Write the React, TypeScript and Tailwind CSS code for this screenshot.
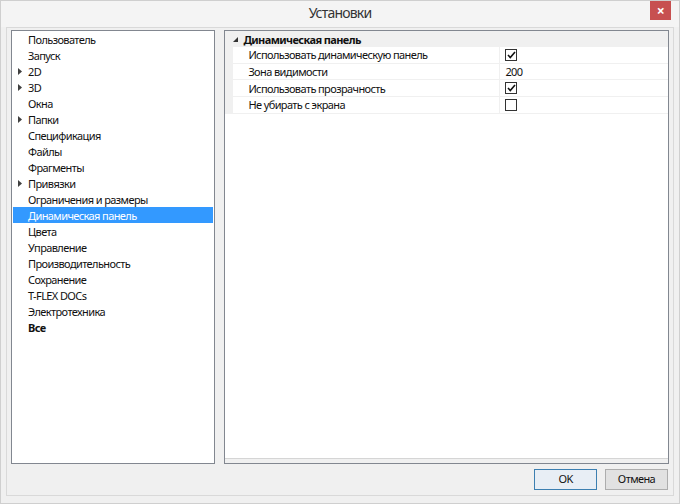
import { useState } from "react";

type NavItem = { label: string; expandable?: boolean; bold?: boolean };

const navItems: NavItem[] = [
    { label: "Пользователь" },
    { label: "Запуск" },
    { label: "2D", expandable: true },
    { label: "3D", expandable: true },
    { label: "Окна" },
    { label: "Папки", expandable: true },
    { label: "Спецификация" },
    { label: "Файлы" },
    { label: "Фрагменты" },
    { label: "Привязки", expandable: true },
    { label: "Ограничения и размеры" },
    { label: "Динамическая панель" },
    { label: "Цвета" },
    { label: "Управление" },
    { label: "Производительность" },
    { label: "Сохранение" },
    { label: "T-FLEX DOCs" },
    { label: "Электротехника" },
    { label: "Все", bold: true },
];

type Prop = { name: string; kind: "check" | "text"; value: boolean | string };

const props: Prop[] = [
    { name: "Использовать динамическую панель", kind: "check", value: true },
    { name: "Зона видимости", kind: "text", value: "200" },
    { name: "Использовать прозрачность", kind: "check", value: true },
    { name: "Не убирать с экрана", kind: "check", value: false },
];

export default function App() {
    const [selected, setSelected] = useState("Динамическая панель");

    return (
        <div
            className="w-[680px] h-[504px] bg-[#f0f0f0] border border-[#cfcfcf] flex flex-col text-[11px] tracking-[-0.6px] text-[#111]"
            style={{ fontFamily: '"Noto Sans", "Open Sans", sans-serif' }}
        >
            {/* title bar */}
            <div className="h-[26px] shrink-0 flex items-start relative bg-[#f4f4f4]">
                <div className="flex-1 text-center text-[14px] tracking-[-0.8px] text-[#333] pt-[1px]">Установки</div>
                <button className="absolute right-[8px] top-0 w-[21px] h-[19px] bg-[#c75050] text-white flex items-center justify-center text-[14px] font-bold leading-none">
                    ×
                </button>
            </div>

            {/* client area */}
            <div className="flex-1 mx-[5px] mb-[7px] border border-[#d9d9d9] flex flex-col px-[4px] pt-[2px]">
                <div className="flex gap-[9px] h-[434px]">
                    <NavList selected={selected} onSelect={setSelected} />
                    <PropertyGrid />
                </div>
                <div className="flex justify-end gap-[8px] mt-[5px] pr-[1px]">
                    <button className="w-[63px] h-[21px] border border-[#3c7fb1] bg-[#e8eef5] text-[11px]">OK</button>
                    <button className="w-[63px] h-[21px] border border-[#adadad] bg-[#e1e1e1] text-[11px]">Отмена</button>
                </div>
            </div>
        </div>
    );
}

function NavList({ selected, onSelect }: { selected: string; onSelect: (s: string) => void }) {
    return (
        <div className="w-[205px] h-full bg-white border border-[#828790] px-[1px]">
            {navItems.map((item) => {
                const active = item.label === selected;
                return (
                    <div
                        key={item.label}
                        onClick={() => onSelect(item.label)}
                        className={
                            "h-[16px] flex items-center leading-none cursor-default " +
                            (active ? "bg-[#3399ff] text-white" : "")
                        }
                    >
                        <span className="w-[15px] flex justify-end pr-[6px] shrink-0">
                            {item.expandable && (
                                <svg width="4" height="7" viewBox="0 0 4 7">
                                    <path d="M0 0 L4 3.5 L0 7 Z" fill="#404040" />
                                </svg>
                            )}
                        </span>
                        <span className={item.bold ? "font-bold" : ""}>{item.label}</span>
                    </div>
                );
            })}
        </div>
    );
}

function PropertyGrid() {
    return (
        <div className="w-[446px] h-full bg-white border border-[#828790] flex flex-col">
            <div className="flex-1">
                <div className="h-[16px] bg-[#f0f0f0] flex items-center leading-none">
                    <span className="w-[18px] flex justify-center shrink-0 pl-[2px]">
                        <svg width="5" height="5" viewBox="0 0 5 5">
                            <path d="M5 0 L5 5 L0 5 Z" fill="#333" />
                        </svg>
                    </span>
                    <span className="font-bold">Динамическая панель</span>
                </div>
                {props.map((p) => (
                    <div key={p.name} className="h-[16.7px] flex">
                        <div className="w-[8px] bg-[#f0f0f0] shrink-0" />
                        <div className="w-[267px] shrink-0 flex items-center pl-[15px] border-b border-r border-[#f0f0f0] leading-none">
                            {p.name}
                        </div>
                        <div className="flex-1 flex items-center pl-[5px] border-b border-[#f0f0f0] leading-none">
                            {p.kind === "check" ? (
                                <Checkbox checked={p.value as boolean} />
                            ) : (
                                <span className="tracking-[-0.6px]">{p.value as string}</span>
                            )}
                        </div>
                    </div>
                ))}
            </div>
            <div className="h-[5px] bg-[#f0f0f0] border-t border-[#d5d5d5]" />
        </div>
    );
}

function Checkbox({ checked }: { checked: boolean }) {
    return (
        <span className="w-[12px] h-[12px] border border-[#333] bg-white flex items-center justify-center">
            {checked && (
                <svg width="9" height="8" viewBox="0 0 9 8">
                    <path d="M1 4 L3.3 6.5 L8 1" fill="none" stroke="#111" strokeWidth="1.6" />
                </svg>
            )}
        </span>
    );
}
